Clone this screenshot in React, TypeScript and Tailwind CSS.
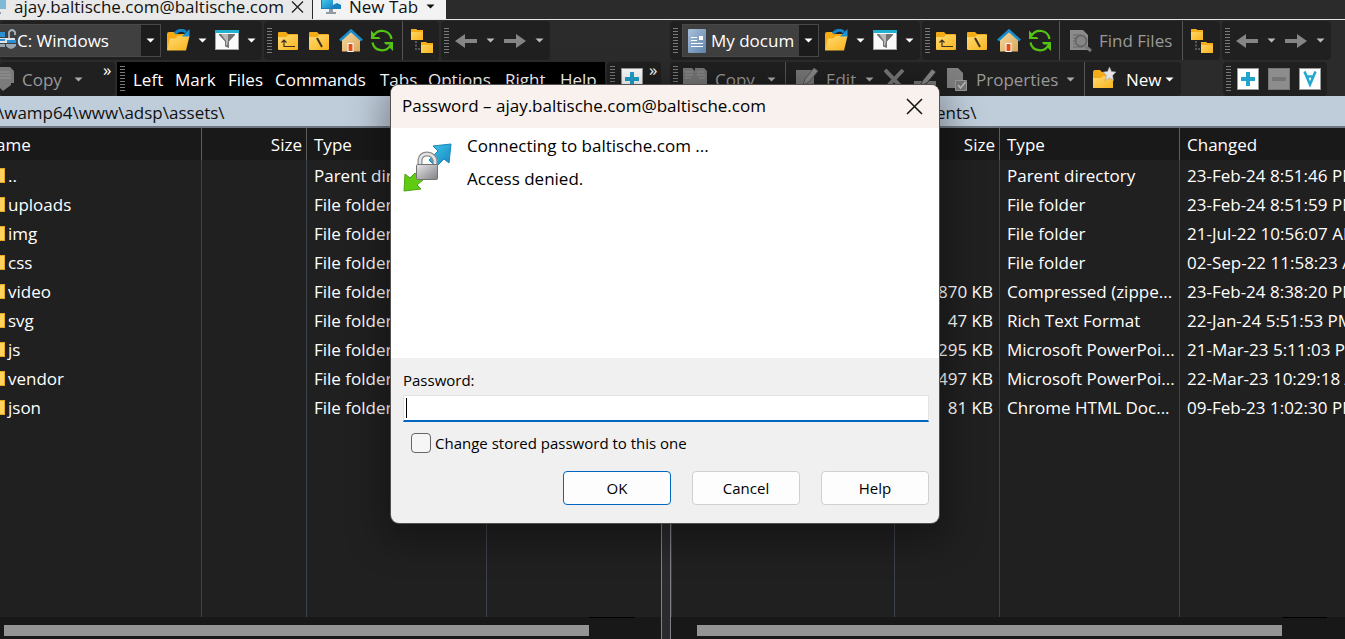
import React from 'react';

const Caret = ({ className = '', color = '#fff' }: { className?: string; color?: string }) => (
  <svg width="9" height="5" viewBox="0 0 9 5" className={`shrink-0 ${className}`} aria-hidden="true">
    <path d="M0.5 0.5h8L4.5 4.5z" fill={color} />
  </svg>
);

const Grip = ({ className = '' }: { className?: string }) => (
  <svg width="5" height="26" viewBox="0 0 5 26" className={`shrink-0 ${className}`} aria-hidden="true">
    {[0, 3, 6, 9, 12, 15, 18, 21, 24].map((y) => (
      <rect key={y} y={y} width="5" height="1" fill="#7a7a7a" />
    ))}
  </svg>
);

const Gradients = () => (
  <svg width="0" height="0" className="absolute" aria-hidden="true">
    <defs>
      <linearGradient id="gold" x1="0" y1="0" x2="1" y2="1">
        <stop offset="0" stopColor="#ffdb74" />
        <stop offset="1" stopColor="#f9b41c" />
      </linearGradient>
      <linearGradient id="steel" x1="0" y1="0" x2="1" y2="1">
        <stop offset="0" stopColor="#e8e8ea" />
        <stop offset="1" stopColor="#808085" />
      </linearGradient>
      <linearGradient id="docblue" x1="0" y1="0" x2="1" y2="1">
        <stop offset="0" stopColor="#a9c0da" />
        <stop offset="1" stopColor="#5f84ac" />
      </linearGradient>
      <linearGradient id="sky" x1="0" y1="0" x2="1" y2="1">
        <stop offset="0" stopColor="#42c8e8" />
        <stop offset="1" stopColor="#1683c4" />
      </linearGradient>
      <linearGradient id="wall" x1="0" y1="0" x2="1" y2="1">
        <stop offset="0" stopColor="#f7d9a0" />
        <stop offset="1" stopColor="#d9a95c" />
      </linearGradient>
    </defs>
  </svg>
);

const Icon = ({ w = 24, children, className = '' }: { w?: number; children: React.ReactNode; className?: string }) => (
  <svg width={w} height="24" viewBox={`0 0 ${w} 24`} className={`block shrink-0 ${className}`} aria-hidden="true">
    {children}
  </svg>
);

const OpenFolder = () => (
  <Icon>
    <path d="M1 21V5q0-2 2-2h5l2 2h9v5" fill="#f7ab12" />
    <path d="M1 21.500 4 9.500h5l3-2.500h11.500L20 21.500z" fill="url(#gold)" />
    <path d="M9 4.500Q14-1 20 3" fill="none" stroke="#1584c7" strokeWidth="3" />
    <path d="M23.500 0v7.500H16z" fill="#1c94d4" />
  </Icon>
);

const Filter = () => (
  <Icon>
    <rect x=".5" y="1.500" width="23" height="19" fill="#fbfbfb" stroke="#a5a5a5" />
    <rect width="24" height="3" y="1" fill="#22b0cf" />
    <path d="M4 5h16v1l-6 6.500V19l-4-1.500v-5L4 6z" fill="#737373" />
    <path d="M6 5h7v7l-1 5-1-1v-4z" fill="#b9b9b9" />
  </Icon>
);

const FolderShape = ({ children }: { children: React.ReactNode }) => (
  <Icon w={21}>
    <path d="M0 4q0-1 1-1h7l2 2h9q1 0 1 1v5H0z" fill="#f3ab17" />
    <path d="M0 8h8l2-2h10v14q0 1-1 1H1q-1 0-1-1z" fill="url(#gold)" />
    {children}
  </Icon>
);

const UpFolder = () => (
  <FolderShape>
    <path d="M6 11v6.500h11M3.500 13.500 6 11l2.500 2.500" fill="none" stroke="#3b3320" strokeWidth="1.200" />
  </FolderShape>
);

const RootFolder = () => (
  <FolderShape>
    <path d="m8 9 5 9" fill="none" stroke="#3b3320" strokeWidth="2" />
  </FolderShape>
);

const Home = () => (
  <Icon>
    <path d="M3 10 12 1.500l9 8.500v12.500H3z" fill="url(#wall)" />
    <path d="m1 11.500 11-10 11 10" fill="none" stroke="#1b8ccb" strokeWidth="2.600" />
    <rect x="9" y="14.500" width="5" height="8" fill="#e4501a" stroke="#fff" />
  </Icon>
);

const Refresh = () => (
  <Icon>
    <path d="M3.500 7A9.600 9.600 0 0 1 21.500 10M20.500 16A9.600 9.600 0 0 1 2.500 13.500" fill="none" stroke="#55c313" strokeWidth="2.200" />
    <path d="M1 1.500 4 4.500v3.500h5l1.500 2H1zM23 22l-3-3v-3.500h-4.500L14 13h9z" fill="#55c313" />
  </Icon>
);

const Tree = () => (
  <Icon>
    <path d="M0 0h5l1 1h6v10H0z" fill="url(#gold)" />
    <path d="M10 13h5l1 1h6v10H10z" fill="url(#gold)" />
    <path d="M0 0h5l1 1h6v2H0zM10 13h5l1 1h6v2H10z" fill="#f5ad19" />
    <path d="M4 12h2v2H4zM4 15.500h2v2H4zM4 19h2v2H4zM7 19h2v2H7z" fill="#5a5a5a" />
  </Icon>
);

const Arrow = ({ right = false }: { right?: boolean }) => (
  <Icon w={22} className={right ? 'rotate-180' : ''}>
    <path d="M0 12 10 5v5h12v4H10v5z" fill="#858585" />
  </Icon>
);

const PlusBox = () => (
  <Icon w={22}>
    <rect x=".5" y="1.500" width="21" height="21" fill="#fff" stroke="#9a9a9a" />
    <path d="M9 5h4v5h5v4h-5v5H9v-5H4v-4h5z" fill="#22a4ce" />
  </Icon>
);

const MinusBox = () => (
  <Icon w={22}>
    <rect x=".5" y="1.500" width="21" height="21" fill="#8d8d8d" stroke="#767676" />
    <path d="M4 10h14v4H4z" fill="#757575" />
  </Icon>
);

const SelectBox = () => (
  <Icon w={22}>
    <rect x=".5" y="1.500" width="21" height="21" fill="#fff" stroke="#9a9a9a" />
    <path d="m5.500 4.500 5.500 13 5.500-13M8 9.500h6" fill="none" stroke="#22a9cf" strokeWidth="2.600" />
  </Icon>
);

const CopyDocs = () => (
  <Icon>
    <path d="M0 1h9l3 3v14H0zM12 1h9l3 3v14H12z" fill="#767676" />
    <path d="M2 5h8M2 8h8M2 11h8M14 5h7M14 8h8M14 11h8" stroke="#929292" />
    <path d="M8 10h8v6h5l-8.500 8L4 16h4z" fill="#777" />
  </Icon>
);

const CopyPart = () => (
  <Icon w={14}>
    <path d="M0 0h10l4 4v12h-3v2l-8 6-3-3z" fill="#7b7b7b" />
    <path d="M0 5h10M0 8h11M0 11h11" stroke="#979797" />
  </Icon>
);

const EditDoc = () => (
  <Icon>
    <path d="M0 3h18v19H0z" fill="#777" />
    <path d="m7 18 2-6L18 1l4 3-9 11z" fill="#888" stroke="#555" />
  </Icon>
);

const Cross = () => (
  <Icon w={21}>
    <path d="m1 3 18 19M19 3 2 21" stroke="#777" strokeWidth="4" />
  </Icon>
);

const Rename = () => (
  <Icon>
    <path d="M0 14h22v9H0z" fill="#777" />
    <path d="m6 19 3-6L18 2l4 3-9 11z" fill="#888" stroke="#333" />
  </Icon>
);

const PropsDoc = () => (
  <Icon w={21}>
    <path d="M0 1h11l5 5v15H0z" fill="#808080" />
    <path d="M8.500 13.500h11v10h-11z" fill="#757575" stroke="#999" />
    <path d="m11 18 2.500 3 5-6" fill="none" stroke="#bbb" strokeWidth="1.500" />
  </Icon>
);

const FindDoc = () => (
  <Icon w={22}>
    <path d="M0 1h13l5 5v15H0z" fill="#8b8b8b" />
    <path d="M3 6h8M3 9h4M3 12h2M3 15h2M3 18h10" stroke="#666" />
    <circle cx="11" cy="12" r="5.500" fill="#858585" stroke="#636363" strokeWidth="1.500" />
    <path d="m15 17 6 5" stroke="#7a7a7a" strokeWidth="3" />
  </Icon>
);

const NewFolder = () => (
  <Icon w={23}>
    <path d="M0 5q0-2 2-2h5l2 2h11v16H0z" fill="#f3ab17" />
    <path d="M0 11h8l2-2h10v12H0z" fill="url(#gold)" />
    <path d="m16.500 0 2 4.500 4.500.5-3.500 3.500 1 5-4-2.500-4.500 2.500 1.500-5L10 5l4.500-.5z" fill="#e4e4e8" stroke="#999" strokeWidth=".6" />
  </Icon>
);

const Monitor = () => (
  <Icon w={21}>
    <path d="M0 0h20v9H0z" fill="#1580bd" />
    <path d="M1 0h11v8H1z" fill="url(#sky)" />
    <path d="M8 9h4v3H8zM5 12h10v2H5z" fill="#929aa4" />
    <path d="M12 0h8v5l-4-2-4 2z" fill="#e8eef3" />
  </Icon>
);

const MonitorPart = () => (
  <Icon w={6}>
    <path d="M0 0h6v9H0z" fill="#7fb9d6" />
    <path d="M0 12h1v2H0z" fill="#929aa4" />
  </Icon>
);

const Drive = () => (
  <Icon w={17}>
    <path d="M0 3h5v5H0z" fill="#2b8fd6" />
    <path d="M0 9h15v5H0z" fill="#dfe5ea" />
    <path d="M0 10h5v2H0zM7 11h9v3H7z" fill="#2b8fd6" />
    <path d="M9 9V3q3-4 6 0v3" fill="none" stroke="#a9b8c2" strokeWidth="1.800" />
    <path d="M0 15h5v3H0zM6 15h10v2q-5 6-10 0z" fill="#99a7b1" />
  </Icon>
);

const DocCard = () => (
  <Icon w={18}>
    <rect width="18" height="24" rx="1" fill="url(#docblue)" />
    <path d="M3 8.500h6M3 11.500h6M3 14.500h12M3 17.500h12" stroke="#fff" />
    <rect x="11" y="7" width="4" height="4" fill="#fff" />
  </Icon>
);

const LockLink = () => (
  <svg width="50" height="50" viewBox="0 0 50 50" className="block shrink-0" aria-hidden="true">
    <path d="M48 1 30 3l5 5-9 9 7 7 8-8 5 4z" fill="url(#sky)" stroke="#1b86b9" />
    <path d="m1 48 1-17 5 4 5-5 8 7-6 5 4 4z" fill="#5fcb12" stroke="#4ba411" />
    <path d="M17 24v-7q1-6 7-6t8 6v7" fill="none" stroke="#8d8d8d" strokeWidth="5" />
    <path d="M17 24v-7q1-6 7-6t8 6v7" fill="none" stroke="#e4e4e4" strokeWidth="2.500" />
    <rect x="13.500" y="21.500" width="21" height="15" rx="1" fill="url(#steel)" stroke="#737373" />
  </svg>
);

const Tool = ({ label, className = '', children }: { label: string; className?: string; children: React.ReactNode }) => (
  <button type="button" aria-label={label} className={`flex shrink-0 items-center ${className}`}>
    {children}
  </button>
);

const Panel = ({ className = '', children }: { className?: string; children: React.ReactNode }) => (
  <div className={`flex shrink-0 items-center rounded-sm bg-[#202020] ${className}`}>{children}</div>
);

const Sep = ({ className = '' }: { className?: string }) => <div className={`w-px shrink-0 self-stretch bg-[#555] ${className}`} />;

const DriveCombo = ({ label, className, children }: { label: string; className: string; children: React.ReactNode }) => (
  <button type="button" className={`flex h-[33px] shrink-0 items-center border border-[#484848] bg-[#404040] text-left ${className}`}>
    {children}
    <span className="min-w-0 flex-1 overflow-hidden pt-px whitespace-nowrap">{label}</span>
    <span className="flex h-full w-[19px] shrink-0 items-center justify-center bg-[#1c1c1c]">
      <Caret />
    </span>
  </button>
);

const OpenFilterTools = ({ side }: { side: string }) => (
  <>
    <Tool label={`${side} open directory`} className="ml-[5px] gap-2">
      <OpenFolder />
      <Caret />
    </Tool>
    <Tool label={`${side} filter`} className="ml-2 gap-2">
      <Filter />
      <Caret />
    </Tool>
  </>
);

const NavTools = () => (
  <>
    <Grip className="ml-[3px]" />
    <Tool label="Parent directory" className="ml-[6px]"><UpFolder /></Tool>
    <Tool label="Root directory" className="ml-[10px]"><RootFolder /></Tool>
    <Tool label="Home directory" className="ml-[9px]"><Home /></Tool>
    <Tool label="Refresh" className="ml-[7px]"><Refresh /></Tool>
  </>
);

const HistoryPanel = () => (
  <Panel className="w-[109px]">
    <Grip className="ml-[3px]" />
    <Tool label="Back" className="ml-[6px] gap-[9px]">
      <Arrow />
      <Caret color="#bbb" />
    </Tool>
    <Tool label="Forward" className="ml-[9px] gap-[9px]">
      <Arrow right />
      <Caret color="#bbb" />
    </Tool>
  </Panel>
);

type Row = { name?: string; size?: string; type: string; changed?: string };

const localRows: Row[] = [
  { name: '..', type: 'Parent directory' },
  ...['uploads', 'img', 'css', 'video', 'svg', 'js', 'vendor', 'json'].map((name) => ({ name, type: 'File folder' })),
];

const documentRows: Row[] = [
  { type: 'Parent directory', changed: '23-Feb-24 8:51:46 PM' },
  { type: 'File folder', changed: '23-Feb-24 8:51:59 PM' },
  { type: 'File folder', changed: '21-Jul-22 10:56:07 AM' },
  { type: 'File folder', changed: '02-Sep-22 11:58:23 AM' },
  { size: '870 KB', type: 'Compressed (zippe...', changed: '23-Feb-24 8:38:20 PM' },
  { size: '47 KB', type: 'Rich Text Format', changed: '22-Jan-24 5:51:53 PM' },
  { size: '295 KB', type: 'Microsoft PowerPoi...', changed: '21-Mar-23 5:11:03 PM' },
  { size: '497 KB', type: 'Microsoft PowerPoi...', changed: '22-Mar-23 10:29:18 AM' },
  { size: '81 KB', type: 'Chrome HTML Doc...', changed: '09-Feb-23 1:02:30 PM' },
];

const FileTable = ({ rows, nameCol, nameHead, changedHead }: { rows: Row[]; nameCol: string; nameHead: string; changedHead: string }) => {
  const line = 'border-r border-[#3d434b] p-0 pt-[2px]';
  const head = 'border-r border-[#5c5c5c] p-0 pt-[2px] font-normal';
  return (
    <table className="h-full w-full table-fixed border-separate border-spacing-0 whitespace-nowrap">
      <colgroup>
        <col className={nameCol} />
        <col className="w-[105px]" />
        <col className="w-[180px]" />
        <col />
      </colgroup>
      <thead>
        <tr className="h-8 bg-[#191919] text-left">
          <th className={head}><span className="-ml-1">{nameHead}</span></th>
          <th className={`${head} text-right`}><span className="pr-1">Size</span></th>
          <th className={head}><span className="pl-[7px]">Type</span></th>
          <th className="overflow-hidden p-0 pt-[2px] pl-[7px] font-normal">{changedHead}</th>
        </tr>
      </thead>
      <tbody>
        {rows.map((r, i) => (
          <tr key={i} className="h-[29px]">
            <td className={line}>
              {r.name && (
                <span className="flex items-center gap-[3px]">
                  <span className="h-[15px] w-[5px] border-y border-r border-[#e8a921] bg-[#ffd35e]" />
                  {r.name}
                </span>
              )}
            </td>
            <td className={`${line} text-right`}><span className="pr-[6px]">{r.size}</span></td>
            <td className={line}><span className="pl-[7px]">{r.type}</span></td>
            <td className="overflow-hidden p-0 pt-[2px] pl-[7px]">{r.changed}</td>
          </tr>
        ))}
        <tr>
          <td className={line} />
          <td className={line} />
          <td className={line} />
          <td className="p-0" />
        </tr>
      </tbody>
    </table>
  );
};

const ScrollTrack = ({ lead }: { lead: string }) => (
  <div className="flex h-[22px] shrink-0 bg-[#181818]">
    <div className={`shrink-0 ${lead}`} />
    <div className="mt-2 h-[11px] w-[585px] shrink-0 bg-[#949494]" />
    <div className="h-px w-[45px] bg-black" />
  </div>
);

const PathBar = ({ className = '', children }: { className?: string; children: React.ReactNode }) => (
  <div className={`h-8 shrink-0 border-b-2 border-[#6d7681] bg-[#bfccda] pt-px leading-8 whitespace-nowrap text-[#111] ${className}`}>{children}</div>
);

const dialogButton = 'h-[34px] w-[108px] rounded border bg-[#fdfdfd] pb-px';

const PasswordDialog = () => (
  <div
    role="dialog"
    aria-labelledby="dialog-title"
    className="absolute top-[85px] left-[391px] flex w-[548px] flex-col overflow-hidden rounded-lg bg-[#f0f0f0] text-black shadow-[0_0_0_1px_#515151,0_10px_36px_8px_rgba(0,0,0,0.35)]"
  >
    <div className="flex h-[43px] items-center justify-between bg-[#f9f1ed] pr-4 pl-[11px]">
      <h1 id="dialog-title" className="pb-[2px]">Password – ajay.baltische.com@baltische.com</h1>
      <button type="button" aria-label="Close">
        <svg width="17" height="17" viewBox="0 0 17 17" className="block" aria-hidden="true">
          <path d="m1 1 15 15M16 1 1 16" stroke="#111" strokeWidth="1.500" />
        </svg>
      </button>
    </div>
    <div className="flex h-[230px] gap-[14px] bg-white pt-[15px] pl-3">
      <LockLink />
      <div className="-mt-[14px]">
        <p className="leading-[33px]">Connecting to baltische.com ...</p>
        <p className="leading-[33px]">Access denied.</p>
      </div>
    </div>
    <form className="flex flex-col px-[10px] pt-[10px] pb-[18px] text-[15px]" onSubmit={(e) => e.preventDefault()}>
      <label htmlFor="password" className="pl-[2px] leading-6">Password:</label>
      <div className="relative mt-[3px] ml-[2px]">
        <input id="password" type="password" className="block h-[27px] w-full border border-b-2 border-[#e3e3e3] border-b-[#0067c0] bg-white px-1 outline-none" />
        <span className="absolute top-[3px] left-[3px] h-5 w-px bg-black" />
      </div>
      <label className="mt-[9px] ml-[10px] flex h-6 items-center gap-1">
        <input type="checkbox" className="h-5 w-5 appearance-none rounded border border-[#666] bg-[#f6f6f6]" />
        Change stored password to this one
      </label>
      <div className="mt-4 flex justify-end gap-[21px]">
        <button type="submit" className={`${dialogButton} border-[#0067c0]`}>OK</button>
        <button type="button" className={`${dialogButton} border-[#d0d0d0]`}>Cancel</button>
        <button type="button" className={`${dialogButton} border-[#d0d0d0]`}>Help</button>
      </div>
    </form>
  </div>
);

export default function App() {
  return (
    <div className="relative flex h-screen flex-col overflow-hidden bg-[#2b2b2b] font-['Open_Sans','Noto_Sans',sans-serif] text-[17px] leading-6 text-white">
      <Gradients />
      <div className="flex h-5 shrink-0 items-stretch overflow-hidden border-b border-[#e4e4e4] whitespace-nowrap text-[#111]">
        <div className="flex w-[312px] shrink-0 items-end bg-[#e9e9e9]">
          <div className="flex h-full items-start"><MonitorPart /></div>
          <span className="ml-2 w-[268px]">ajay.baltische.com@baltische.com</span>
          <button type="button" aria-label="Close tab" className="ml-[9px] self-start pt-px">
            <svg width="13" height="12" viewBox="0 0 13 12" aria-hidden="true">
              <path d="m1 .5 11 11M12 .5l-11 11" stroke="#222" strokeWidth="1.300" />
            </svg>
          </button>
        </div>
        <button type="button" className="ml-px flex w-[133px] shrink-0 items-end bg-[#f3f3f3]">
          <span className="ml-2 flex h-full items-start"><Monitor /></span>
          <span className="ml-[7px] w-[77px] text-left">New Tab</span>
          <Caret color="#111" className="mt-1 self-start" />
        </button>
      </div>

      <div className="flex shrink-0">
        <div className="flex w-[670px] shrink-0 flex-col">
          <div className="flex h-[42px] gap-[2px] pt-px pb-[2px]">
            <Panel className="w-[262px]">
              <DriveCombo label="C: Windows" className="w-[161px] border-l-0"><Drive /></DriveCombo>
              <OpenFilterTools side="Left" />
            </Panel>
            <Panel className="w-[175px]">
              <NavTools />
              <Sep className="ml-2" />
              <Tool label="Directory tree" className="ml-2"><Tree /></Tool>
            </Panel>
            <HistoryPanel />
          </div>
          <div className="flex h-[34px] gap-[2px]">
            <Panel className="w-[115px] text-[#999]">
              <button type="button" className="flex items-center">
                <CopyPart />
                <span className="ml-2 w-[52px] pt-px text-left">Copy</span>
                <Caret color="#aaa" />
              </button>
              <span className="ml-5 self-start leading-4 text-white">»</span>
            </Panel>
            <nav className="flex w-[488px] shrink-0 items-center bg-black whitespace-nowrap">
              <Grip className="ml-[3px]" />
              <div className="ml-2 flex pt-px">
                <a href="#left" className="w-[42px]">Left</a>
                <a href="#mark" className="w-[53px]">Mark</a>
                <a href="#files" className="w-[47px]">Files</a>
                <a href="#commands" className="w-[105px]">Commands</a>
                <a href="#tabs" className="w-12">Tabs</a>
                <a href="#options" className="w-[77px]">Options</a>
                <a href="#right" className="w-[55px]">Right</a>
                <a href="#help">Help</a>
              </div>
            </nav>
            <Panel className="w-[54px]">
              <Grip className="ml-[3px]" />
              <Tool label="Select files" className="ml-[6px]"><PlusBox /></Tool>
              <span className="ml-[6px] self-start leading-4">»</span>
            </Panel>
          </div>
        </div>

        <div className="flex min-w-0 flex-1 flex-col overflow-hidden">
          <div className="flex h-[42px] gap-[2px] pt-px pb-[2px]">
            <Panel className="w-[250px]">
              <Grip className="ml-[3px]" />
              <DriveCombo label="My docum" className="ml-1 w-[137px] gap-[5px] pl-[5px]"><DocCard /></DriveCombo>
              <OpenFilterTools side="Right" />
            </Panel>
            <Panel className="w-[298px]">
              <NavTools />
              <Sep className="ml-[7px]" />
              <button type="button" className="ml-[10px] flex items-center gap-[7px] whitespace-nowrap text-[#999]">
                <FindDoc />
                <span className="w-[73px] pt-px text-left">Find Files</span>
              </button>
              <Sep className="ml-[10px]" />
              <Tool label="Directory tree" className="ml-2"><Tree /></Tool>
            </Panel>
            <HistoryPanel />
          </div>
          <div className="flex h-[34px]">
            <Panel className="w-[511px] text-[#999]">
              <Grip className="ml-[3px]" />
              <button type="button" className="ml-[5px] flex items-center">
                <CopyDocs />
                <span className="ml-2 w-[52px] pt-px text-left">Copy</span>
                <Caret color="#aaa" />
              </button>
              <Sep className="ml-[9px]" />
              <button type="button" className="ml-[10px] flex items-center">
                <EditDoc />
                <span className="ml-[6px] w-[39px] pt-px text-left">Edit</span>
                <Caret color="#aaa" />
              </button>
              <Tool label="Delete" className="ml-[10px]"><Cross /></Tool>
              <Tool label="Rename" className="ml-[9px]"><Rename /></Tool>
              <button type="button" className="ml-[9px] flex items-center">
                <PropsDoc />
                <span className="ml-2 w-[90px] pt-px text-left">Properties</span>
                <Caret color="#aaa" />
              </button>
              <Sep className="ml-[9px]" />
              <button type="button" className="ml-2 flex items-center text-white">
                <NewFolder />
                <span className="ml-[10px] w-[39px] pt-px text-left">New</span>
                <Caret />
              </button>
            </Panel>
            <Panel className="ml-[42px] w-[104px]">
              <Grip className="ml-[3px]" />
              <Tool label="Select files" className="ml-[6px]"><PlusBox /></Tool>
              <Tool label="Unselect files" className="ml-[9px]"><MinusBox /></Tool>
              <Tool label="Select all" className="ml-[9px]"><SelectBox /></Tool>
            </Panel>
          </div>
        </div>
      </div>

      <div className="flex min-h-0 flex-1">
        <section className="flex w-[661px] shrink-0 flex-col">
          <PathBar><span className="-ml-[2px]">\wamp64\www\adsp\assets\</span></PathBar>
          <div className="min-h-0 flex-1 overflow-hidden bg-[#202020]">
            <FileTable rows={localRows} nameCol="w-[202px]" nameHead="ame" changedHead="" />
          </div>
          <ScrollTrack lead="w-1" />
        </section>
        <div className="flex w-[10px] shrink-0 flex-col">
          <PathBar>{null}</PathBar>
          <div className="flex-1 border-x border-[#808088] bg-[#2b2b2d]" />
        </div>
        <section className="flex min-w-0 flex-1 flex-col overflow-hidden">
          <PathBar className="pl-[265px]">ents\</PathBar>
          <div className="min-h-0 flex-1 overflow-hidden border-l border-[#2c3d50] bg-[#202020]">
            <FileTable rows={documentRows} nameCol="w-[223px]" nameHead="" changedHead="Changed" />
          </div>
          <ScrollTrack lead="w-[26px]" />
        </section>
      </div>

      <PasswordDialog />
    </div>
  );
}
